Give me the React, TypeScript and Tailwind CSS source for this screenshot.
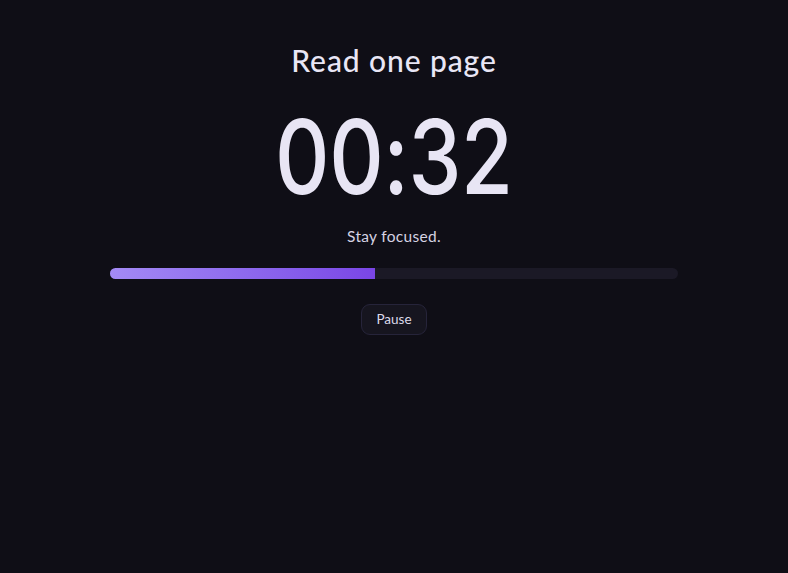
import { useState } from "react";

const total = 60;

export default function App() {
  const [left] = useState(32);
  const pct = ((total - left) / total) * 100;
  const mm = String(Math.floor(left / 60)).padStart(2, "0");
  const ss = String(left % 60).padStart(2, "0");

  return (
    <main className="min-h-screen w-full bg-[#0f0e16] font-['Lato',sans-serif] text-[#e9e6f5]">
      <div className="mx-auto flex w-[568px] flex-col items-center pt-[40px]">
        {/* title */}
        <h1 className="text-[30px] leading-[40px] font-medium tracking-[0.9px]">
          Read one page
        </h1>

        {/* clock — Inter squeezed to match the narrow display digits */}
        <div className="mt-[25px] scale-x-[0.82] font-['Inter',sans-serif] text-[103px] leading-[103px] font-medium tracking-[-0.5px] text-[#e8e5f4]">
          {mm}:{ss}
        </div>

        <p className="mt-[18px] text-[15.5px] leading-[20px] tracking-[0.3px] text-[#d6d3e3]">
          Stay focused.
        </p>

        {/* progress */}
        <div className="mt-[22px] h-[11px] w-full overflow-hidden rounded-full bg-[#1b1926]">
          <div
            className="h-full bg-gradient-to-r from-[#a48af5] to-[#7a45e6]"
            style={{ width: `${pct}%` }}
          />
        </div>

        <button className="mt-[25px] h-[31px] rounded-[9px] border border-[#26243a] bg-[#16151f] px-[14px] text-[13.5px] text-[#dcd9ea]">
          Pause
        </button>
      </div>
    </main>
  );
}
